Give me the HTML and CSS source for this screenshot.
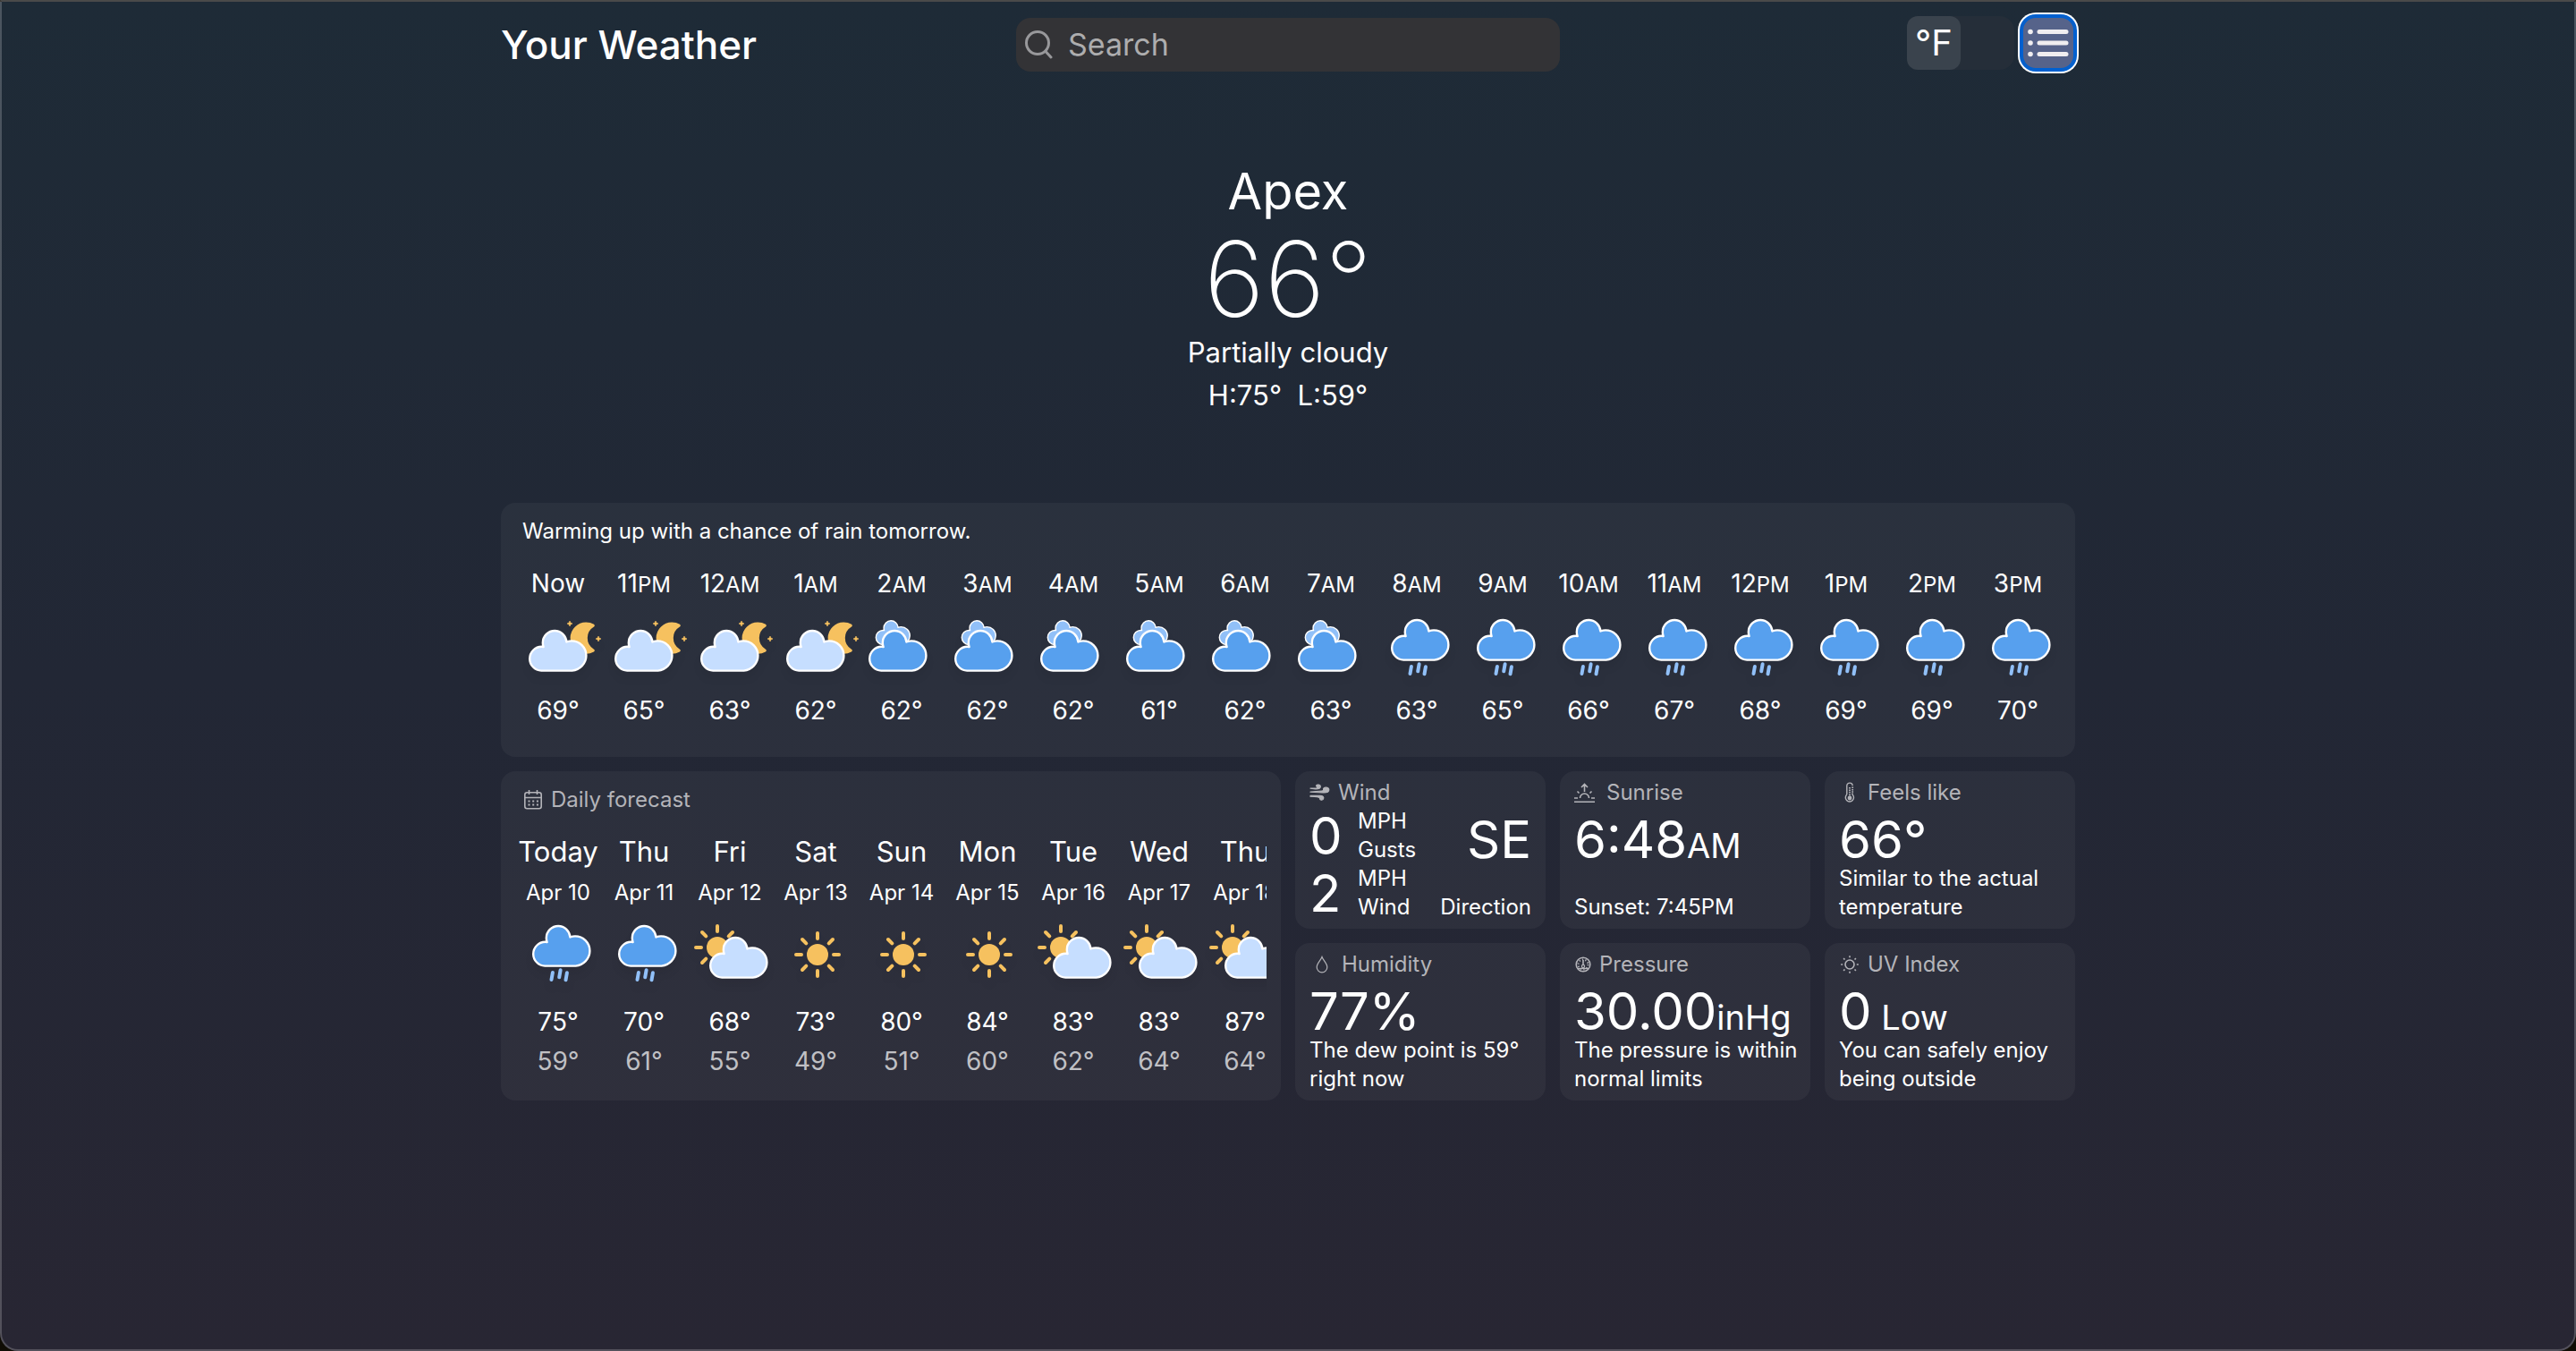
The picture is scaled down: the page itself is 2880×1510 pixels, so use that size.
FILE: index.html
```html
<!DOCTYPE html>
<html lang="en">
<head>
<meta charset="utf-8">
<meta name="viewport" content="width=device-width, initial-scale=1">
<title>Your Weather</title>
<link rel="stylesheet" href="styles.css">
</head>
<body>
<svg class="sprite" aria-hidden="true">
  <defs>
    <path id="cloud" d="M47.7 35.4c0-4.6-3.7-8.2-8.2-8.2-1 0-1.9.2-2.8.5-.3-3.4-3.1-6.2-6.6-6.2-3.7 0-6.7 3-6.7 6.7 0 .8.2 1.6.4 2.3-.3-.1-.7-.1-1-.1-3.7 0-6.7 3-6.7 6.7 0 3.6 2.9 6.6 6.5 6.7h17.2c4.4-.5 7.9-4 7.9-8.4z" stroke="#fff" stroke-width="1.2" stroke-linejoin="round"/>
    <g id="sun">
      <circle r="12" fill="#f6c15f"/>
      <g stroke="#f6c15f" stroke-width="4" stroke-linecap="round">
        <path d="M0-18V-24M0 18V24M-18 0H-24M18 0H24M12.7-12.7L17-17M12.7 12.7L17 17M-12.7 12.7L-17 17M-12.7-12.7L-17-17"/>
      </g>
    </g>
    <path id="star" d="M0-3L.9-.9L3 0L.9.9L0 3L-.9.9L-3 0L-.9-.9Z" fill="#f6c15f" stroke="#f6c15f" stroke-width=".6"/>
    <symbol id="night" viewBox="0 0 96 80" overflow="visible">
      <path transform="translate(56 2) scale(1.6)" d="M14.5 13.2c0-3.7 2-6.9 5-8.7-1.5-.9-3.2-1.3-5-1.3-5.5 0-10 4.5-10 10s4.5 10 10 10c1.8 0 3.5-.5 5-1.3-3-1.7-5-5-5-8.7z" fill="#f6c15f" stroke="#f6c15f" stroke-width="2" stroke-linejoin="round"/>
      <use href="#star" x="61" y="7"/>
      <use href="#star" x="93" y="24"/>
      <use href="#cloud" transform="translate(-16 -28) scale(2)" fill="#c6deff"/>
    </symbol>
    <symbol id="cloudy" viewBox="0 0 96 80" overflow="visible">
      <use href="#cloud" transform="translate(0 -22) scale(1.2)" fill="#91c0f8"/>
      <use href="#cloud" transform="translate(-20 -28) scale(2)" fill="#57a0ee"/>
    </symbol>
    <symbol id="rain" viewBox="0 0 96 80" overflow="visible">
      <use href="#cloud" transform="translate(-12 -40) scale(2)" fill="#57a0ee"/>
      <path d="M41.9 55L40.5 63M50.6 52.3L49.2 60.3M57.9 55.3L56.5 63.3" stroke="#91c0f8" stroke-width="4" stroke-linecap="round"/>
    </symbol>
    <symbol id="partly" viewBox="0 0 96 80" overflow="visible">
      <use href="#sun" transform="translate(34 27)"/>
      <use href="#cloud" transform="translate(-6 -27) scale(2)" fill="#c6deff"/>
    </symbol>
    <symbol id="clear" viewBox="0 0 96 80" overflow="visible">
      <use href="#sun" transform="translate(50 35)"/>
    </symbol>
  </defs>
</svg>

<div class="page">
  <header class="topbar">
    <h1 class="brand">Your Weather</h1>
    <div class="search">
      <svg class="search-icon" viewBox="0 0 32 32" aria-hidden="true"><circle cx="14" cy="14" r="12.500"/><path d="M23 23.500L29 30"/></svg>
      <input class="search-input" type="search" placeholder="Search" aria-label="Search">
    </div>
    <div class="actions">
      <button class="unit-toggle" type="button" aria-label="Temperature unit"><span class="unit">°F</span></button>
      <button class="list-button" type="button" aria-label="Saved locations">
        <svg viewBox="0 0 60 60" aria-hidden="true">
          <g fill="#f0eef0"><circle cx="10" cy="17.500" r="2.800"/><circle cx="10" cy="30" r="2.800"/><circle cx="10" cy="42.500" r="2.800"/>
          <rect x="17.500" y="15" width="35" height="5" rx="2.500"/><rect x="17.500" y="27.500" width="35" height="5" rx="2.500"/><rect x="17.500" y="40" width="35" height="5" rx="2.500"/></g>
        </svg>
      </button>
    </div>
  </header>

  <main>
    <section class="current">
      <h2 class="city">Apex</h2>
      <p class="temperature">66°</p>
      <p class="condition">Partially cloudy</p>
      <p class="range">H:75°&nbsp; L:59°</p>
    </section>

    <section class="card hourly">
      <p class="summary">Warming up with a chance of rain tomorrow.</p>
      <ol class="hours">
        <li><span class="time">Now</span><svg class="icon"><use href="#night"/></svg><span class="temp">69°</span></li>
        <li><span class="time">11<small>PM</small></span><svg class="icon"><use href="#night"/></svg><span class="temp">65°</span></li>
        <li><span class="time">12<small>AM</small></span><svg class="icon"><use href="#night"/></svg><span class="temp">63°</span></li>
        <li><span class="time">1<small>AM</small></span><svg class="icon"><use href="#night"/></svg><span class="temp">62°</span></li>
        <li><span class="time">2<small>AM</small></span><svg class="icon"><use href="#cloudy"/></svg><span class="temp">62°</span></li>
        <li><span class="time">3<small>AM</small></span><svg class="icon"><use href="#cloudy"/></svg><span class="temp">62°</span></li>
        <li><span class="time">4<small>AM</small></span><svg class="icon"><use href="#cloudy"/></svg><span class="temp">62°</span></li>
        <li><span class="time">5<small>AM</small></span><svg class="icon"><use href="#cloudy"/></svg><span class="temp">61°</span></li>
        <li><span class="time">6<small>AM</small></span><svg class="icon"><use href="#cloudy"/></svg><span class="temp">62°</span></li>
        <li><span class="time">7<small>AM</small></span><svg class="icon"><use href="#cloudy"/></svg><span class="temp">63°</span></li>
        <li><span class="time">8<small>AM</small></span><svg class="icon"><use href="#rain"/></svg><span class="temp">63°</span></li>
        <li><span class="time">9<small>AM</small></span><svg class="icon"><use href="#rain"/></svg><span class="temp">65°</span></li>
        <li><span class="time">10<small>AM</small></span><svg class="icon"><use href="#rain"/></svg><span class="temp">66°</span></li>
        <li><span class="time">11<small>AM</small></span><svg class="icon"><use href="#rain"/></svg><span class="temp">67°</span></li>
        <li><span class="time">12<small>PM</small></span><svg class="icon"><use href="#rain"/></svg><span class="temp">68°</span></li>
        <li><span class="time">1<small>PM</small></span><svg class="icon"><use href="#rain"/></svg><span class="temp">69°</span></li>
        <li><span class="time">2<small>PM</small></span><svg class="icon"><use href="#rain"/></svg><span class="temp">69°</span></li>
        <li><span class="time">3<small>PM</small></span><svg class="icon"><use href="#rain"/></svg><span class="temp">70°</span></li>
      </ol>
    </section>

    <div class="details">
      <section class="card daily">
        <h3 class="label daily-label">
          <svg class="glyph w24" viewBox="0 0 24 24" aria-hidden="true"><g fill="none" stroke="currentColor" stroke-width="1.600"><rect x="2.800" y="3.800" width="18.400" height="18" rx="2.500"/><path d="M2.800 9.500H21.200M7.500 1V6M16.500 1V6"/><path d="M6.500 13.500H18M6.500 17.500H18" stroke-width="2" stroke-dasharray="2 2.700"/></g></svg>
          Daily forecast
        </h3>
        <ol class="days">
          <li><span class="day">Today</span><span class="date">Apr 10</span><svg class="icon"><use href="#rain"/></svg><span class="temp">75°</span><span class="temp low">59°</span></li>
          <li><span class="day">Thu</span><span class="date">Apr 11</span><svg class="icon"><use href="#rain"/></svg><span class="temp">70°</span><span class="temp low">61°</span></li>
          <li><span class="day">Fri</span><span class="date">Apr 12</span><svg class="icon"><use href="#partly"/></svg><span class="temp">68°</span><span class="temp low">55°</span></li>
          <li><span class="day">Sat</span><span class="date">Apr 13</span><svg class="icon"><use href="#clear"/></svg><span class="temp">73°</span><span class="temp low">49°</span></li>
          <li><span class="day">Sun</span><span class="date">Apr 14</span><svg class="icon"><use href="#clear"/></svg><span class="temp">80°</span><span class="temp low">51°</span></li>
          <li><span class="day">Mon</span><span class="date">Apr 15</span><svg class="icon"><use href="#clear"/></svg><span class="temp">84°</span><span class="temp low">60°</span></li>
          <li><span class="day">Tue</span><span class="date">Apr 16</span><svg class="icon"><use href="#partly"/></svg><span class="temp">83°</span><span class="temp low">62°</span></li>
          <li><span class="day">Wed</span><span class="date">Apr 17</span><svg class="icon"><use href="#partly"/></svg><span class="temp">83°</span><span class="temp low">64°</span></li>
          <li><span class="day">Thu</span><span class="date">Apr 18</span><svg class="icon"><use href="#partly"/></svg><span class="temp">87°</span><span class="temp low">64°</span></li>
        </ol>
      </section>

      <div class="tiles">
        <section class="card tile">
          <h3 class="label">
            <svg class="glyph w24" viewBox="0 0 24 24" aria-hidden="true"><g fill="currentColor" stroke="currentColor" stroke-width="1.200" stroke-linecap="round" stroke-linejoin="round"><path d="M1 7.200H7C9.500 7.200 8.500 5 7.500 4.200C8.500 2.300 12.500 2.800 12.300 5.500C12 8 9.500 8 7 8Z"/><path d="M1 11.200L14 10C16.500 9.800 15.500 8.200 15.500 7.600C16.500 5 22 6 21.800 9C21.500 12.500 18 12 15 12Z"/><path d="M1 15.400H12C15 15.400 16.500 17 15.500 19C14.500 20.800 11.500 20.500 11.500 18.200C11.500 17 9 16.500 1 16.200Z"/></g></svg>
            Wind
          </h3>
          <div class="wind">
            <div class="speeds">
              <span class="speed">0</span><span class="note">MPH<br>Gusts</span>
              <span class="speed">2</span><span class="note">MPH<br>Wind</span>
            </div>
            <div class="direction"><span class="value">SE</span><span class="note">Direction</span></div>
          </div>
        </section>

        <section class="card tile">
          <h3 class="label">
            <svg class="glyph w28" viewBox="0 0 28 24" aria-hidden="true"><g fill="none" stroke="currentColor" stroke-width="1.600"><path d="M0 22.200H23M0 18H4M19 18H23M6.500 18A5 5 0 0 1 16.500 18M11.500 11V2.500M8 6L11.500 2.500L15 6M5.500 12.500L3.500 10.500M17.500 12.500L19.500 10.500"/></g></svg>
            Sunrise
          </h3>
          <p class="value">6:48<small>AM</small></p>
          <p class="note">Sunset: 7:45PM</p>
        </section>

        <section class="card tile">
          <h3 class="label">
            <svg class="glyph w24" viewBox="0 0 24 24" aria-hidden="true"><g fill="none" stroke="currentColor" stroke-width="1.400"><path d="M8.800 14V4.300A3.200 3.200 0 0 1 15.200 4.300M8.800 14A4.600 4.600 0 1 0 15 14V12.500"/><path d="M12 6V17M15.200 5.500V13" stroke-width="1.800" stroke-dasharray="1.500 .900"/><circle cx="12" cy="18" r="1.700" fill="currentColor"/></g></svg>
            Feels like
          </h3>
          <p class="value">66°</p>
          <p class="note">Similar to the actual temperature</p>
        </section>

        <section class="card tile">
          <h3 class="label">
            <svg class="glyph w28" viewBox="0 0 28 24" aria-hidden="true"><path d="M14 3.500C12.500 7.500 8.200 11 8.200 15A5.800 5.800 0 0 0 19.800 15C19.800 11 15.500 7.500 14 3.500Z" fill="none" stroke="currentColor" stroke-width="1.200"/></svg>
            Humidity
          </h3>
          <p class="value">77%</p>
          <p class="note">The dew point is 59° right now</p>
        </section>

        <section class="card tile">
          <h3 class="label">
            <svg class="glyph w20" viewBox="0 0 20 24" aria-hidden="true"><g fill="none" stroke="currentColor"><circle cx="10" cy="12" r="7.800" stroke-width="1.600"/><circle cx="10" cy="12" r="5.500" stroke-width="2" stroke-dasharray="1.200 2.255"/><path d="M10 7V13" stroke-width="1.600"/><circle cx="10" cy="14" r="1.600" stroke-width="1.200"/><path d="M4 16.500H16" stroke-width="1.400"/></g></svg>
            Pressure
          </h3>
          <p class="value">30.00<small>inHg</small></p>
          <p class="note">The pressure is within normal limits</p>
        </section>

        <section class="card tile">
          <h3 class="label">
            <svg class="glyph w24" viewBox="0 0 24 24" aria-hidden="true"><g fill="none" stroke="currentColor" stroke-width="1.600"><circle cx="12" cy="12" r="5"/><path d="M12 2.200V4.200M12 19.800V21.800M2.200 12H4.200M19.800 12H21.800M5.100 5.100L6.500 6.500M17.500 17.500L18.900 18.900M5.100 18.900L6.500 17.500M17.500 6.500L18.900 5.100"/></g></svg>
            UV Index
          </h3>
          <p class="value">0<small> Low</small></p>
          <p class="note">You can safely enjoy being outside</p>
        </section>
      </div>
    </div>
  </main>
</div>
</body>
</html>
```

FILE: styles.css
```css
* {
  box-sizing: border-box;
}

html {
  background: #100d05;
}

body {
  margin: 0;
  min-height: 100vh;
  border: 2px solid rgba(255, 255, 255, 0.2);
  border-top-color: #4a4a4a;
  border-radius: 0 0 20px 20px;
  background: linear-gradient(#1e2b37, #222735 50%, #282633) border-box;
  color: #fff;
  font-family: Inter, "Liberation Sans", sans-serif;
  font-size: 24px;
  line-height: 32px;
}

h1, h2, h3, p, ol {
  margin: 0;
  padding: 0;
  font-weight: 400;
}

ol {
  list-style: none;
}

button, input {
  border: 0;
  padding: 0;
  color: inherit;
  font: inherit;
}

.sprite {
  position: absolute;
  width: 0;
  height: 0;
}

.page {
  max-width: 1760px;
  margin: 0 auto;
}

/* Top bar */

.topbar {
  display: grid;
  grid-template-columns: 1fr 608px 1fr;
  align-items: start;
  padding-top: 16px;
}

.brand {
  font-size: 44px;
  font-weight: 450;
  line-height: 60px;
}

.brand, .search {
  margin-top: 2px;
}

.search {
  display: flex;
  align-items: center;
  gap: 16px;
  height: 60px;
  padding: 0 12px 0 10px;
  border-radius: 16px;
  background: #333336;
}

.search-icon {
  flex: none;
  width: 32px;
  height: 32px;
  fill: none;
  stroke: #98989b;
  stroke-width: 3;
  stroke-linecap: round;
}

.search-input {
  flex: 1;
  min-width: 0;
  background: none;
  outline: none;
  font-size: 34px;
  line-height: 44px;
  appearance: none;
}

.search-input::placeholder {
  color: #adadae;
  opacity: 1;
}

.actions {
  display: flex;
  justify-content: flex-end;
  gap: 8px;
}

.unit-toggle {
  display: flex;
  width: 120px;
  height: 60px;
  border-radius: 16px;
  background: #252e39;
}

.unit {
  width: 60px;
  border-radius: 12px;
  background: #3a434d;
  font-size: 40px;
  line-height: 60px;
  text-align: center;
}

.list-button {
  width: 60px;
  height: 60px;
  border-radius: 16px;
  background: #56638a;
  box-shadow: inset 0 0 0 2px #0060d0, 0 0 0 2px #0060d0, 0 0 0 4px #fff;
}

.list-button svg {
  display: block;
  width: 60px;
  height: 60px;
}

/* Current conditions */

.current {
  padding: 98px 0 100px;
  text-align: center;
  font-size: 31px;
  line-height: 40px;
}

.city {
  font-size: 56px;
  line-height: 72px;
}

.temperature {
  font-size: 116px;
  font-weight: 200;
  line-height: 124px;
}

.range {
  margin-top: 8px;
}

/* Cards */

.card {
  border-radius: 16px;
  background: rgba(255, 255, 255, 0.045);
}

.hourly {
  padding: 16px 16px 34px;
}

.summary {
  padding: 0 8px;
}

.hours, .days {
  display: flex;
  margin-top: 24px;
  text-align: center;
}

.hours li {
  flex: 1;
}

.days {
  overflow: hidden;
}

.days li {
  flex: none;
  width: 96px;
}

.hours li, .days li {
  display: flex;
  flex-direction: column;
  align-items: center;
}

.time, .temp {
  font-size: 28px;
  line-height: 36px;
}

.time small {
  font-size: 24px;
  line-height: 24px;
}

.icon {
  width: 96px;
  height: 80px;
  overflow: visible;
  filter: drop-shadow(0 8px 4px rgba(0, 0, 0, 0.05));
}

.hours .icon {
  margin: 20px 0 6px;
}

.days .icon {
  margin: 18px 0 12px;
}

.details {
  display: grid;
  grid-template-columns: 1fr 1fr;
  gap: 16px;
  margin-top: 16px;
}

.daily {
  min-width: 0;
  padding: 16px;
}

.label {
  display: flex;
  align-items: center;
  gap: 8px;
  color: #b4b4b9;
  font-size: 24px;
  line-height: 32px;
}

.daily-label {
  padding-left: 8px;
}

.glyph {
  flex: none;
  height: 24px;
}

.w20 {
  width: 20px;
}

.w24 {
  width: 24px;
}

.w28 {
  width: 28px;
}

.day {
  font-size: 31px;
  line-height: 36px;
}

.date {
  margin-top: 12px;
}

.low {
  margin-top: 8px;
  color: #c0c0c4;
}

/* Detail tiles */

.tiles {
  display: grid;
  grid-template-columns: repeat(3, minmax(0, 1fr));
  grid-auto-rows: 176px;
  gap: 16px;
}

.tile {
  display: flex;
  flex-direction: column;
  padding: 8px 12px 8px 16px;
}

.tile > .note {
  margin-top: auto;
}

.value {
  padding-top: 8px;
  font-size: 58px;
  line-height: 56px;
}

.value small {
  font-size: 38px;
  line-height: 38px;
}

.wind {
  display: flex;
  justify-content: space-between;
  padding-right: 4px;
}

.speeds {
  display: grid;
  grid-template-columns: 38px auto;
  column-gap: 16px;
}

.speed {
  font-size: 58px;
  line-height: 64px;
}

.direction {
  display: flex;
  flex-direction: column;
  justify-content: space-between;
  align-items: flex-end;
}
```
